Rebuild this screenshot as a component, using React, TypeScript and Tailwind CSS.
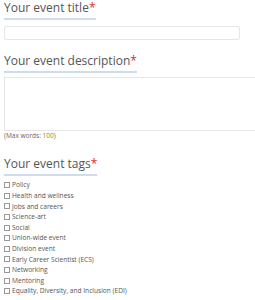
const tags = [
  "Policy",
  "Health and wellness",
  "Jobs and careers",
  "Science-art",
  "Social",
  "Union-wide event",
  "Division event",
  "Early Career Scientist (ECS)",
  "Networking",
  "Mentoring",
  "Equality, Diversity, and Inclusion (EDI)",
]

function Heading({ children, className = "" }: { children: string; className?: string }) {
  return (
    <h2 className={`w-fit border-b-2 border-[#cddcee] pb-[3px] text-[12px] leading-[14px] text-[#555] ${className}`}>
      {children}
      <span className="text-[#e02b2b]">*</span>
    </h2>
  )
}

export default function App() {
  return (
    <div className="h-[300px] w-[255px] overflow-hidden bg-white pl-[4px] pt-[1px] font-['Open_Sans',sans-serif]">
      <Heading>Your event title</Heading>
      <div className="mt-[6px] h-[14px] w-[236px] rounded-[2px] border border-[#e6e6e6]" />

      <Heading className="mt-[14px]">Your event description</Heading>
      <div className="mt-[4px] h-[54px] w-[260px] border border-[#e6e6e6]" />
      <p className="mt-[1px] text-[6.5px] leading-[8px] text-[#666]">
        (Max words: <span className="text-[#6a9a3a]">100</span>)
      </p>

      <Heading className="mt-[17px]">Your event tags</Heading>
      <ul className="mt-[4px] flex flex-col">
        {tags.map((tag) => (
          <li key={tag} className="flex h-[10.6px] items-center gap-[2px] text-[6.6px] text-[#555]">
            <span className="h-[6px] w-[6px] border border-[#999] bg-white" />
            {tag}
          </li>
        ))}
      </ul>
    </div>
  )
}
